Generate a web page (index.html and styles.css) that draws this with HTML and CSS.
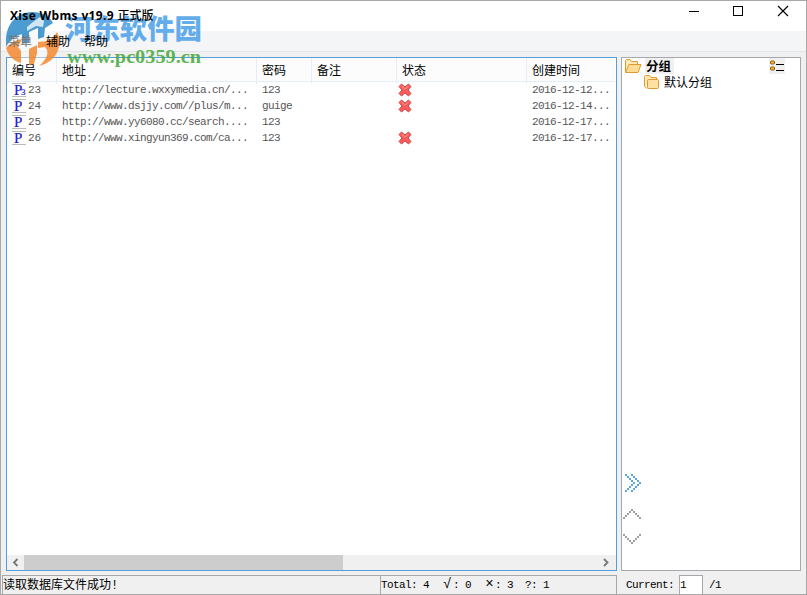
FILE: index.html
```
<!DOCTYPE html>
<html lang="zh-CN">

<head>
  <meta charset="utf-8">
  <title>Xise Wbms v19.9 正式版</title>
  <link rel="stylesheet" href="styles.css">
</head>

<body>
  <svg width="0" height="0" class="defs">
    <symbol id="cross" viewBox="0 0 14 14">
      <path d="M3.5 1 L7 4 L10.5 1 L13 3.5 L10 7 L13 10.5 L10.5 13 L7 10 L3.5 13 L1 10.5 L4 7 L1 3.5 Z" fill="#f95c5c" stroke="#d84444" stroke-linejoin="round" />
      <path d="M3.5 3 L7 6 L10.5 3" fill="none" stroke="#ff9a9a" />
    </symbol>
  </svg>

  <div class="window">
    <div class="titlebar">
      <h1>Xise Wbms v19.9 <span>正式版</span></h1>
      <svg class="controls" width="110" height="20" viewBox="0 0 110 20" fill="none" stroke="#000">
        <path d="M4 8.5 H14" />
        <rect x="48.5" y="3.5" width="9" height="9" />
        <path d="M93 3 L103 13 M103 3 L93 13" stroke-width="1.2" />
      </svg>
    </div>

    <div class="menubar">
      <span class="faded">菜单</span>
      <span>辅助</span>
      <span>帮助</span>
    </div>

    <div class="main">
      <div class="list">
        <div class="row head">
          <div>编号</div>
          <div>地址</div>
          <div>密码</div>
          <div>备注</div>
          <div>状态</div>
          <div>创建时间</div>
        </div>
        <div class="row">
          <div class="id"><b>P<sub>3</sub></b>23</div>
          <div>http://lecture.wxxymedia.cn/...</div>
          <div>123</div>
          <div></div>
          <div class="state"><svg><use href="#cross" /></svg></div>
          <div>2016-12-12...</div>
        </div>
        <div class="row">
          <div class="id"><b>P</b>24</div>
          <div>http://www.dsjjy.com//plus/m...</div>
          <div>guige</div>
          <div></div>
          <div class="state"><svg><use href="#cross" /></svg></div>
          <div>2016-12-14...</div>
        </div>
        <div class="row">
          <div class="id"><b>P</b>25</div>
          <div>http://www.yy6080.cc/search....</div>
          <div>123</div>
          <div></div>
          <div class="state"></div>
          <div>2016-12-17...</div>
        </div>
        <div class="row">
          <div class="id"><b>P</b>26</div>
          <div>http://www.xingyun369.com/ca...</div>
          <div>123</div>
          <div></div>
          <div class="state"><svg><use href="#cross" /></svg></div>
          <div>2016-12-17...</div>
        </div>
        <div class="scrollbar">
          <svg width="17" height="15" viewBox="0 0 17 15"><path d="M10.5 4 L7 7.5 L10.5 11" /></svg>
          <div class="thumb"></div>
          <svg width="17" height="15" viewBox="0 0 17 15"><path d="M5 4 L8.5 7.5 L5 11" /></svg>
        </div>
      </div>

      <div class="groups">
        <div class="group root">
          <svg width="17" height="16" viewBox="0 0 17 16">
            <path d="M.5 14.5 V2.5 L1.5 1.5 H5 L6.5 3.5 H12.5 V6" fill="#ffe9b8" stroke="#e09a30" />
            <path d="M.5 14.5 L4 6.5 H16 L13 14.5 Z" fill="#ffdc96" stroke="#e09a30" />
          </svg>
          <strong>分组</strong>
          <svg class="view" width="16" height="16" viewBox="0 0 16 16">
            <rect x="1.5" y="3" width="4" height="3" rx="1" fill="#f5b82e" stroke="#8a5a10" />
            <rect x="1.5" y="9" width="4" height="3" rx="1" fill="#f5b82e" stroke="#8a5a10" />
            <path d="M7 6.5 H15 M7 12.5 H15" stroke="#000" />
          </svg>
        </div>
        <div class="group child">
          <svg width="16" height="16" viewBox="0 0 16 16">
            <path d="M.5 12.5 V2.5 L1.5 1.5 H5.5 L7 3.5 H12.5 V5 M.5 12.5 L3 14.5" fill="#ffe9b8" stroke="#e09a30" />
            <rect x="3.5" y="5.5" width="11" height="9" rx="1" fill="#ffe0a0" stroke="#e09a30" />
          </svg>
          <span>默认分组</span>
        </div>
        <svg class="arrows" width="20" height="76" viewBox="0 0 20 76" fill="none" stroke-width="2" shape-rendering="crispEdges">
          <path d="M3 3h2m0 2h2m0 2h2m0 2h2m0 2h2m-4 2h2m-4 2h2m-4 2h2m-4 2h2" stroke="#5aa5e6" />
          <path d="M9 3h2m0 2h2m0 2h2m0 2h2m0 2h2m-4 2h2m-4 2h2m-4 2h2m-4 2h2" stroke="#5aa5e6" />
          <path d="M1 46h2m0 -2h2m0 -2h2m0 -2h2m0 -2h2m0 2h2m0 2h2m0 2h2m0 2h2" stroke="#a0a0a0" />
          <path d="M1 63h2m0 2h2m0 2h2m0 2h2m0 2h2m0 -2h2m0 -2h2m0 -2h2m0 -2h2" stroke="#a0a0a0" />
        </svg>
      </div>
    </div>

    <div class="statusbar">
      <div class="message">读取数据库文件成功!</div>
      <div class="totals">Total: 4&nbsp; <i>√</i>: 0&nbsp; <i>×</i>: 3&nbsp; ?: 1</div>
      <div class="pager"><span>Current:</span><input type="text" value="1"><span>/1</span></div>
    </div>
  </div>

  <svg class="watermark" width="210" height="76" viewBox="0 0 210 76">
    <circle cx="32" cy="40" r="23" fill="#fff" opacity=".5" />
    <path d="M6 39 C7 22 18 12 33 12 C43 12 50 17 53 23 L45 28 L44 37 L38 39 L38 28 L29 32 L29 42 L22 44 L22 34 C15 36 9 41 6 47 Z" fill="#2e8bc9" />
    <path d="M33 22 L40 17 L44 21 L43 27 L36 26 L27 31 L27 27 Z" fill="#fff" opacity=".75" />
    <path d="M6 48 C10 43 16 40 22 39 L18 47 L21 51 L21 63 C13 61 8 55 6 48 Z M29 49 L37 45 L37 53 L34 64 L29 65 Z M38 42 C46 42 54 39 57 32 C64 46 56 62 39 66 C47 59 50 52 45 47 L38 48 Z" fill="#f58a30" />
    <text class="site" x="65" y="39" textLength="137" lengthAdjust="spacingAndGlyphs">河东软件园</text>
    <text class="url" x="67" y="63" textLength="134" lengthAdjust="spacingAndGlyphs">www.pc0359.cn</text>
  </svg>
</body>

</html>
```
FILE: styles.css
```
* {
  margin: 0;
  padding: 0;
  box-sizing: border-box;
}

body {
  font-family: 'Liberation Sans', 'Noto Sans CJK SC', sans-serif;
  font-size: 12px;
  color: #000;
}

.defs {
  position: absolute;
}

.window {
  display: flex;
  flex-direction: column;
  width: 807px;
  height: 595px;
  border: 1px solid #a8a8a8;
  background: #f0f0f0;
  overflow: hidden;
}

.titlebar {
  display: flex;
  justify-content: space-between;
  height: 30px;
  padding: 2px 10px 0 9px;
  background: #fff;
}

.titlebar h1 {
  position: relative;
  z-index: 2;
  font: bold 12px/26px 'Open Sans', 'Noto Sans CJK SC', sans-serif;
  letter-spacing: .35px;
  white-space: nowrap;
}

.titlebar h1 span {
  font-weight: 500;
  letter-spacing: 0;
}

.controls {
  margin-right: 1px;
}

.menubar {
  display: flex;
  gap: 14px;
  height: 21px;
  padding-left: 7px;
  line-height: 22px;
  background: #f4f5f7;
  border-bottom: 1px solid #e4e5e8;
}

.menubar span {
  position: relative;
  z-index: 2;
}

.menubar .faded {
  color: #777;
}

.main {
  display: flex;
  gap: 4px;
  height: 514px;
  margin: 5px 5px 0;
}

.list {
  display: flex;
  flex-direction: column;
  width: 611px;
  border: 1px solid #559ddb;
  background: #fff;
}

.row {
  display: grid;
  grid-template-columns: 50px 200px 55px 85px 130px 1fr;
  height: 16px;
  font: 11px/17px 'Liberation Mono', monospace;
  letter-spacing: -.6px;
  color: #555;
  white-space: nowrap;
}

.row > div {
  padding-left: 5px;
}

.row .id {
  display: flex;
  gap: 2px;
  letter-spacing: 0;
}

.id b {
  position: relative;
  width: 14px;
  height: 14px;
  margin-top: 1px;
  padding-left: 2px;
  border-top: 1px solid #bbb;
  border-bottom: 1px solid #bbb;
  font: 15px/12px 'Liberation Serif', serif;
  color: #2020c8;
  -webkit-text-stroke: .2px #2020c8;
}

.id sub {
  position: absolute;
  left: 9px;
  top: 4px;
  font-size: 9px;
  line-height: 9px;
}

.row .state {
  padding: 1px 0 0 1px;
}

.state svg {
  display: block;
  width: 14px;
  height: 14px;
}

.row.head {
  height: 24px;
  margin-right: 1px;
  font: 12px/26px 'Liberation Sans', 'Noto Sans CJK SC', sans-serif;
  letter-spacing: 0;
  color: #000;
  background: #fcfcfc;
  border-bottom: 1px solid #e5eef8;
}

.head > div:not(:last-child) {
  border-right: 1px solid #e5eef8;
}

.scrollbar {
  display: flex;
  justify-content: space-between;
  height: 15px;
  margin-top: auto;
  background: #f0f0f0;
}

.scrollbar .thumb {
  width: 319px;
  margin-right: auto;
  background: #cdcdcd;
}

.scrollbar path {
  fill: none;
  stroke: #777;
  stroke-width: 1.8;
}

.groups {
  display: flex;
  flex-direction: column;
  width: 180px;
  border: 1px solid #a7a8ae;
  background: #fff;
}

.group {
  display: flex;
  height: 16px;
  line-height: 18px;
}

.root {
  padding: 0 15px 0 3px;
}

.root strong {
  width: 29px;
  margin-left: 3px;
  padding-left: 1px;
  font-size: 12.5px;
  background: #f0f0f0;
}

.root .view {
  margin-left: auto;
  background: #f0f0f0;
}

.child {
  padding-left: 22px;
  gap: 4px;
}

.arrows {
  margin-top: auto;
  margin-bottom: 22px;
}

.statusbar {
  display: flex;
  height: 19px;
  margin: 4px 0 0 1px;
  font: 11px/18px 'Liberation Mono', 'Noto Sans CJK SC', monospace;
  letter-spacing: -.6px;
  white-space: nowrap;
}

.message,
.totals {
  height: 19px;
  border: 1px solid #a7a8ae;
  border-bottom: 0;
}

.message {
  width: 378px;
  border-right: 0;
  font-size: 12px;
  line-height: 20px;
  letter-spacing: 0;
}

.totals {
  width: 237px;
}

.totals i {
  display: inline-block;
  width: 12px;
  font-size: 14px;
  font-style: normal;
  text-align: center;
  line-height: 16px;
}

.pager {
  display: flex;
  padding-left: 9px;
}

.pager span {
  line-height: 20px;
}

.pager input {
  width: 24px;
  height: 19px;
  margin: 0 6px 0 5px;
  border: 1px solid #a7a8ae;
  border-bottom: 0;
  background: #fff;
  font: inherit;
}

/* site logo laid over the title and menu */
.watermark {
  position: absolute;
  left: 0;
  top: 0;
  opacity: .85;
  pointer-events: none;
}

.watermark .site {
  font: 900 27px 'Noto Sans CJK SC', sans-serif;
  fill: #4a9fe8;
}

.watermark .url {
  font: bold 19px 'Liberation Serif', serif;
  fill: #45a838;
}
```
